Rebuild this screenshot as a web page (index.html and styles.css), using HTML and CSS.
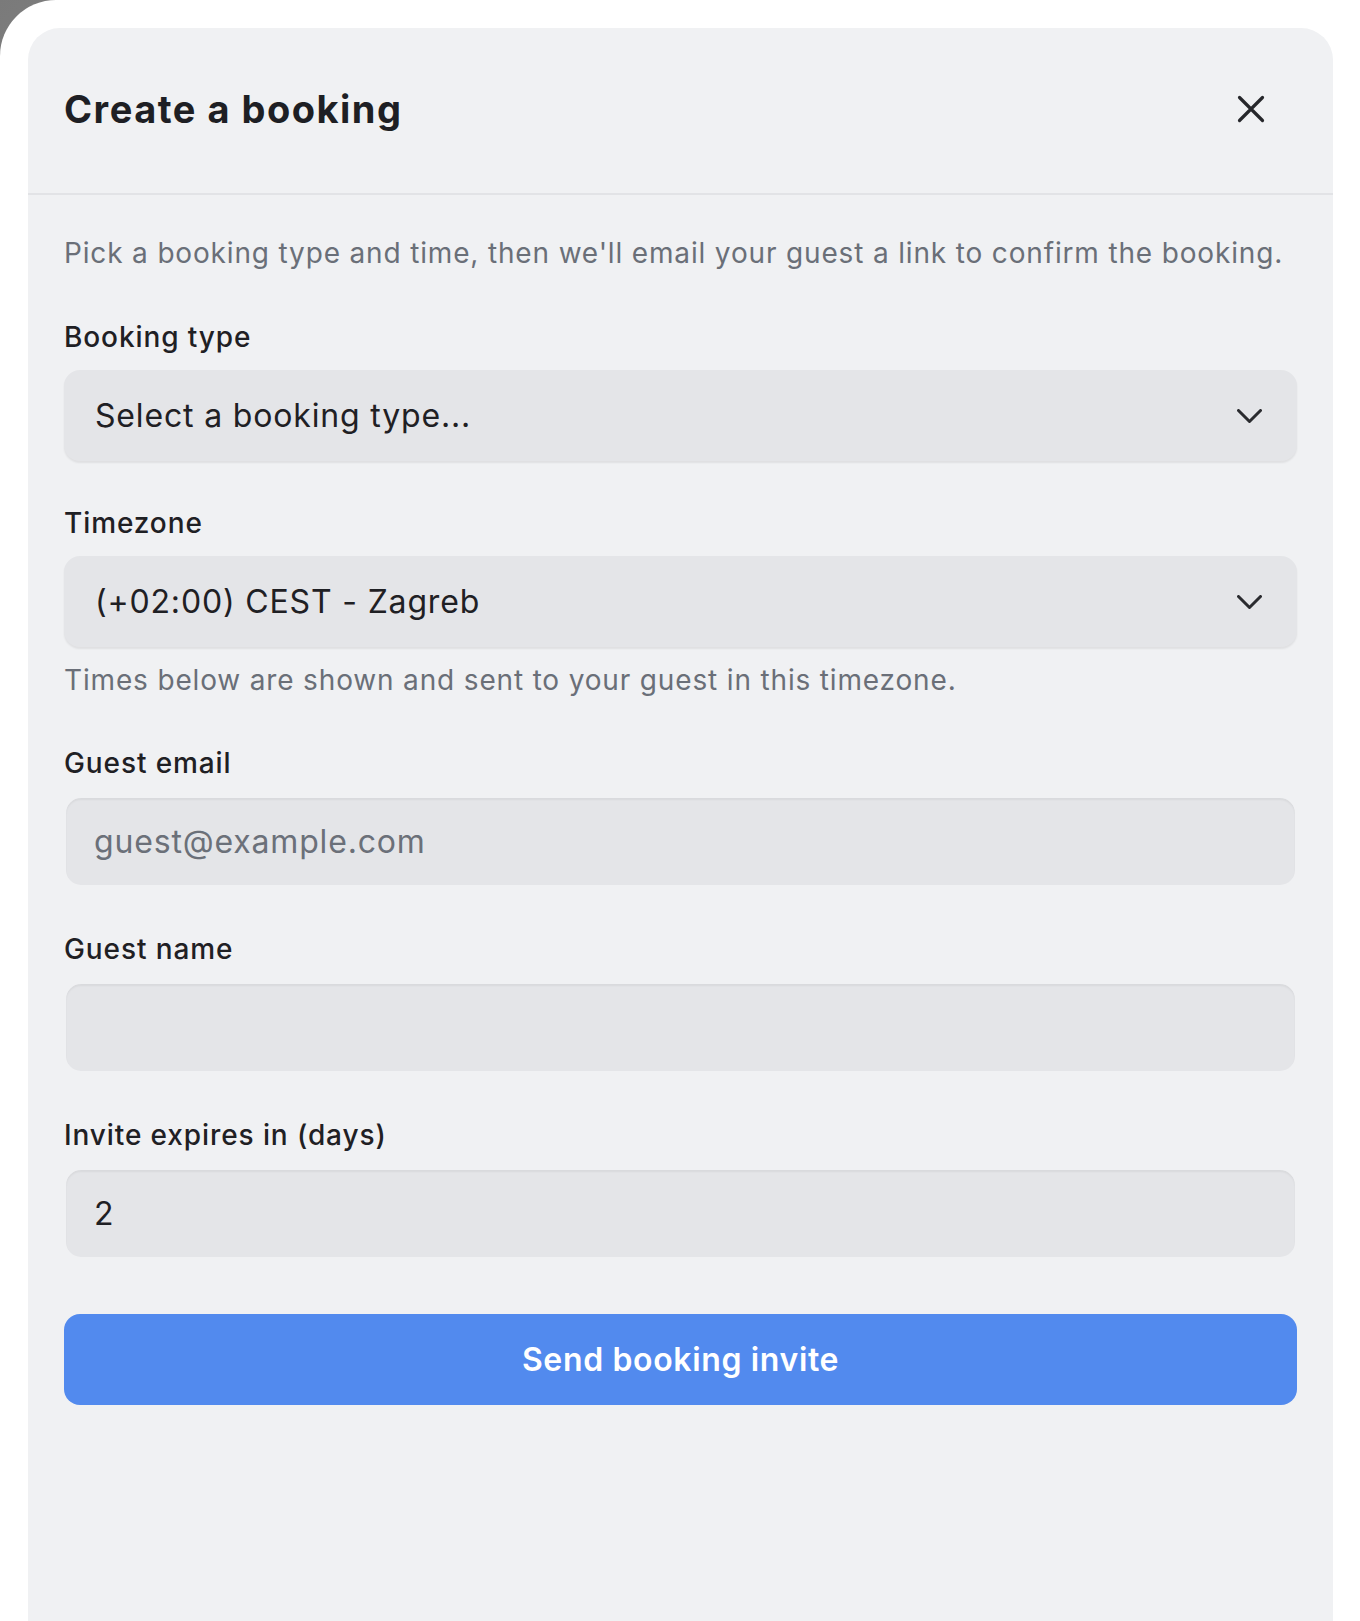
FILE: index.html
```html
<!DOCTYPE html>
<html lang="en">
<head>
<meta charset="utf-8">
<title>Create a booking</title>
<link rel="stylesheet" href="styles.css">
</head>
<body>
<div class="frame">
  <div class="modal">
    <header class="modal-header">
      <h1 class="modal-title">Create a booking</h1>
      <button type="button" class="close-btn" aria-label="Close">
        <svg width="28" height="28" viewBox="0 0 28 28" fill="none" stroke="currentColor" stroke-width="3.2" stroke-linecap="round"><path d="M2.5 2.5L25.5 25.5M25.5 2.5L2.5 25.5"/></svg>
      </button>
    </header>
    <form class="modal-body">
      <p class="intro">Pick a booking type and time, then we'll email your guest a link to confirm the booking.</p>

      <div class="field">
        <label class="field-label">Booking type</label>
        <button type="button" class="select">
          <span>Select a booking type...</span>
          <svg class="chev" width="25" height="14" viewBox="0 0 25 14" fill="none" stroke="currentColor" stroke-width="3" stroke-linecap="round" stroke-linejoin="round"><path d="M1.5 1.5L12.5 12.5L23.5 1.5"/></svg>
        </button>
      </div>

      <div class="field">
        <label class="field-label">Timezone</label>
        <button type="button" class="select">
          <span>(+02:00) CEST - Zagreb</span>
          <svg class="chev" width="25" height="14" viewBox="0 0 25 14" fill="none" stroke="currentColor" stroke-width="3" stroke-linecap="round" stroke-linejoin="round"><path d="M1.5 1.5L12.5 12.5L23.5 1.5"/></svg>
        </button>
        <p class="help">Times below are shown and sent to your guest in this timezone.</p>
      </div>

      <div class="field">
        <label class="field-label">Guest email</label>
        <input class="text-input" type="email" placeholder="guest@example.com">
      </div>

      <div class="field">
        <label class="field-label">Guest name</label>
        <input class="text-input" type="text">
      </div>

      <div class="field">
        <label class="field-label">Invite expires in (days)</label>
        <input class="text-input" type="text" value="2">
      </div>

      <button type="button" class="submit">Send booking invite</button>
    </form>
  </div>
</div>
</body>
</html>
```

FILE: styles.css
```css
* { box-sizing: border-box; }

html, body {
  margin: 0;
  height: 100%;
}

body {
  background: linear-gradient(135deg, #7a7a7a 0%, #a9a9a9 40%, #d0d0d0 100%);
  font-family: Inter, "Noto Sans", sans-serif;
  overflow: hidden;
}

.frame {
  background: #ffffff;
  border-top-left-radius: 56px;
  min-height: 100vh;
  padding: 28px 27px 0 28px;
}

.modal {
  background: #f0f1f3;
  border-radius: 32px 32px 0 0;
  min-height: calc(100vh - 28px);
}

.modal-header {
  height: 167px;
  padding: 0 36px 4px;
  display: flex;
  align-items: center;
  justify-content: space-between;
  border-bottom: 2px solid #e2e3e6;
}

.modal-title {
  margin: 0;
  font-size: 38px;
  font-weight: 700;
  color: #1e1f24;
  letter-spacing: 1.5px;
}

.close-btn {
  border: 0;
  background: none;
  padding: 0;
  margin-right: 32px;
  width: 28px;
  height: 28px;
  color: #26272b;
  display: flex;
}

.modal-body {
  padding: 38px 36px 0;
  display: flex;
  flex-direction: column;
}

.intro {
  margin: 0 0 44px;
  font-size: 28px;
  line-height: 40px;
  letter-spacing: 0.03em;
  color: #6a6f78;
}

.field {
  display: flex;
  flex-direction: column;
  margin-bottom: 42px;
}

.field-label {
  font-size: 28px;
  line-height: 40px;
  font-weight: 500;
  letter-spacing: 0.032em;
  color: #1f2024;
  margin-bottom: 13px;
}

.select {
  height: 91px;
  border: 0;
  border-radius: 16px;
  background: #e4e5e8;
  box-shadow: 0 2px 2px rgba(0, 0, 0, 0.07);
  padding: 0 35px 0 31px;
  display: flex;
  align-items: center;
  justify-content: space-between;
  font-family: Inter, "Noto Sans", sans-serif;
  font-size: 32px;
  letter-spacing: 0.026em;
  color: #1f2024;
  text-align: left;
}

.chev {
  color: #2a2b2f;
}

.help {
  margin: 13px 0 1px;
  font-size: 28px;
  line-height: 40px;
  letter-spacing: 0.03em;
  color: #6a6f78;
}

.text-input {
  height: 91px;
  border: 2px solid #f0f1f3;
  border-radius: 17px;
  background: #e4e5e8;
  box-shadow: inset 0 2px 2px rgba(0, 0, 0, 0.05);
  padding: 0 28px;
  font-family: Inter, "Noto Sans", sans-serif;
  font-size: 32px;
  letter-spacing: 0.026em;
  color: #1f2024;
  outline: none;
}

.text-input::placeholder {
  color: #6b7079;
  opacity: 1;
}

.submit {
  margin-top: 13px;
  height: 91px;
  border: 0;
  border-radius: 16px;
  background: #528aee;
  color: #ffffff;
  font-family: Inter, "Noto Sans", sans-serif;
  font-size: 32px;
  font-weight: 600;
  letter-spacing: 0.02em;
}
```
